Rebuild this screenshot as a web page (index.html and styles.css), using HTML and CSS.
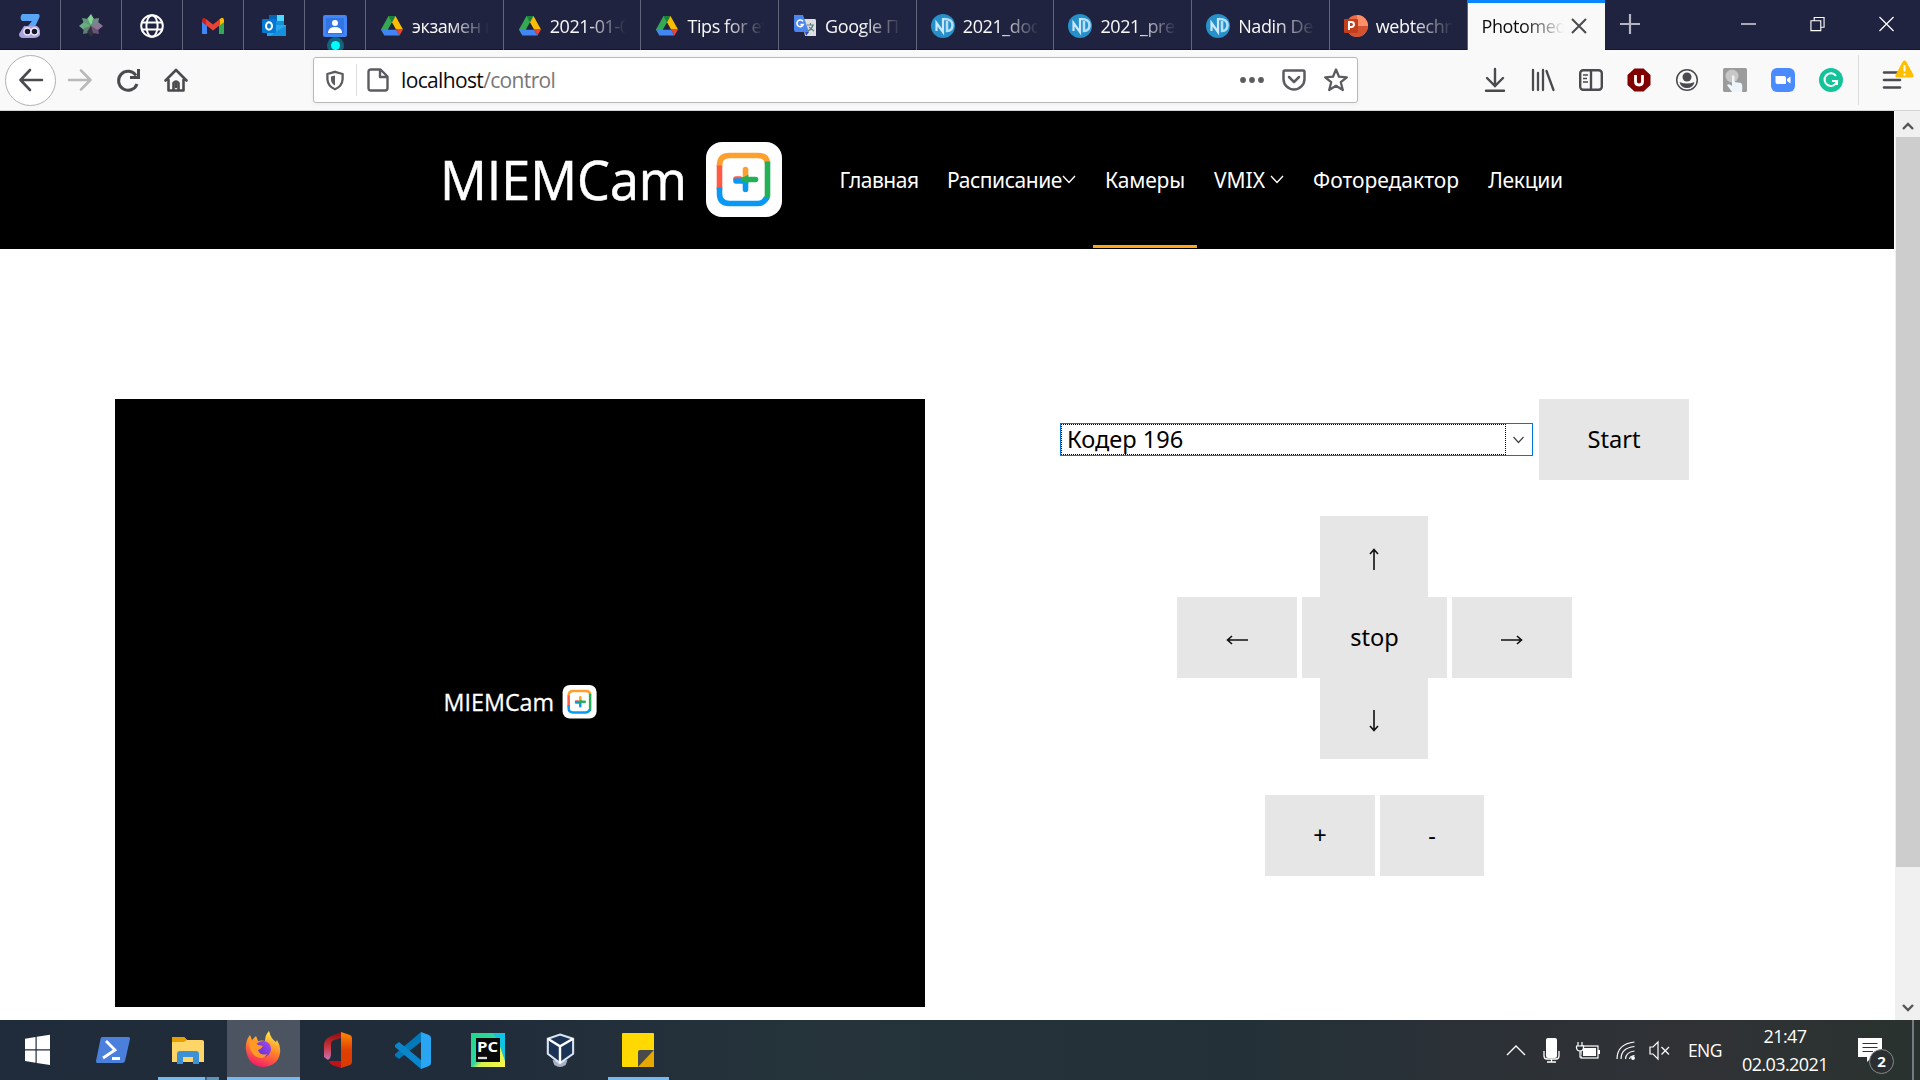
FILE: index.html
```html
<!DOCTYPE html>
<html lang="ru">
<head>
<meta charset="utf-8">
<title>Photomedia</title>
<link rel="stylesheet" href="styles.css">
</head>
<body>
<svg class="defs" aria-hidden="true">
  <defs>
    <linearGradient id="ffBody" x1="0.7" y1="0" x2="0.3" y2="1"><stop offset="0" stop-color="#fff04a"/><stop offset=".45" stop-color="#ff8a26"/><stop offset="1" stop-color="#f5156c"/></linearGradient>
    <linearGradient id="ffGlobe" x1="0" y1="1" x2="1" y2="0"><stop offset="0" stop-color="#592acb"/><stop offset="1" stop-color="#a64bf4"/></linearGradient>
    <linearGradient id="pcBg" x1="0" y1="0" x2="1" y2="1"><stop offset="0" stop-color="#21d789"/><stop offset=".5" stop-color="#2fd8a0"/><stop offset=".6" stop-color="#d9ef4a"/><stop offset="1" stop-color="#fcf84a"/></linearGradient>
    <linearGradient id="officeLeft" x1="0" y1="0" x2="0" y2="1"><stop offset="0" stop-color="#8c0b08"/><stop offset=".5" stop-color="#c8323a"/><stop offset="1" stop-color="#c476b8"/></linearGradient>
    <linearGradient id="officeRight" x1="0" y1="0" x2="0" y2="1"><stop offset="0" stop-color="#ff8a00"/><stop offset=".5" stop-color="#e04000"/><stop offset="1" stop-color="#d83b01"/></linearGradient>
  </defs>
  <symbol id="logo" viewBox="0 0 340 76">
    <text class="logo-text" x="-3" y="58" textLength="247" lengthAdjust="spacingAndGlyphs">MIEMCam</text>
    <rect x="263" y="0" width="76" height="75" rx="16" fill="#fff"/>
    <g transform="translate(-1 -.5)">
    <g fill="none" stroke-width="5.6">
      <path d="M277.500 25V24Q277.500 14 287.500 14H315.500Q325.500 14 325.500 22" stroke="#ffa02e"/>
      <path d="M325.500 20V54Q325.500 56 323.500 58" stroke="#23b057"/>
      <path d="M277.500 24V48" stroke="#ff5a43"/>
      <path d="M277.500 46V52Q277.500 62 287.500 62H315.500Q322 62 324.500 56" stroke="#0a98f5"/>
      <path d="M303.500 28V36" stroke="#ffa02e" stroke-linecap="round"/>
      <path d="M294 37.500H298" stroke="#ff5a43" stroke-linecap="round"/>
      <path d="M294 39.500H303.500V48" stroke="#0a98f5" stroke-linecap="round"/>
      <path d="M302 38H313.500" stroke="#23b057" stroke-linecap="round"/>
    </g>
    <path d="M298 38.500L306.300 33V42Z" fill="#23b057"/>
    </g>
  </symbol>
  <symbol id="drive" viewBox="0 0 24 24">
    <path d="M8.500 2H15.500L12 8.500 4.500 21.500 1 15.500Z" fill="#34a853"/>
    <path d="M8.500 2H15.500L12 8.500Z" fill="#188038"/>
    <path d="M15.500 2L23 15.500H16L12 8.500Z" fill="#fbbc04"/>
    <path d="M1 15.500H16L19.500 21.500H4.500Z" fill="#4285f4"/>
    <path d="M16 15.500H23L19.500 21.500Z" fill="#ea4335"/>
    <path d="M8.200 15.500L12 9 15.800 15.500Z" fill="#20233f"/>
  </symbol>
  <symbol id="nd" viewBox="0 0 24 24">
    <circle cx="12" cy="12" r="12" fill="#2590ca"/>
    <path d="M5.500 17V9L12 18V4" fill="none" stroke="#c9e8fa" stroke-width="2.200"/>
    <path d="M16 7V17Q21.500 17 21.500 11T13 5" fill="none" stroke="#b4dff7" stroke-width="2.600"/>
  </symbol>
</svg>

<div class="tabs">
  <div class="pin"><svg class="ic" viewBox="0 0 24 24"><path d="M4 0H20Q22 0 21.500 3L17 13 10 12 14 7H4Q1 4 4 0Z" fill="#58a4f7"/><path d="M6 12H19Q22 14 22 18V21Q20 24 16 24H5Q1 24 1 20Z" fill="#aaa3dd"/><g fill="#15182d" stroke="#ece9f8" stroke-width="1.500"><circle cx="9.500" cy="17.500" r="3.500"/><circle cx="16.500" cy="17.500" r="3.500"/></g></svg></div>
  <div class="pin"><svg class="ic" viewBox="0 0 24 24"><path d="M12 0L15 5 12 12 8 5Z" fill="#83d596"/><path d="M3 4L9 5 12 12 5 10Z" fill="#5d9c76"/><path d="M0 12L5 8 12 12 5 16Z" fill="#69ad80"/><path d="M4 20L5 14 12 12 9 19Z" fill="#628175"/><path d="M12 23L8 18 12 12 16 18Z" fill="#33313f"/><path d="M20 20L14 19 12 12 19 14Z" fill="#675573"/><path d="M24 12L19 16 12 12 19 8Z" fill="#8d7598"/><path d="M20 4L19 10 12 12 14 5Z" fill="#708c85"/></svg></div>
  <div class="pin"><svg class="ic" viewBox="0 0 24 24" fill="none" stroke="#fff" stroke-width="2"><circle cx="12" cy="12" r="10.800"/><ellipse cx="12" cy="12" rx="5.600" ry="10.800"/><path d="M2 8.500H22M2 15.500H22"/></svg></div>
  <div class="pin"><svg class="ic" viewBox="0 0 24 24"><path d="M1 7V20H6V11Z" fill="#4285f4"/><path d="M18 11V20H23V7Z" fill="#34a853"/><path d="M1 8V6Q1 4 3.500 4L6 6V12Z" fill="#c5221f"/><path d="M18 12V6Q22 1.500 23 6V8Z" fill="#fbbc04"/><path d="M5 5L12 10.500 19 5V11L12 16.500 5 11Z" fill="#ea4335"/></svg></div>
  <div class="pin"><svg class="ic" viewBox="0 0 24 24"><path d="M7 1H22V13H7Z" fill="#1490df"/><path d="M15 1H22V7H15Z" fill="#50d9ff"/><path d="M7 1H15V7H7Z" fill="#0364b8"/><path d="M5 11H24V22H5Z" fill="#28a8ea"/><path d="M24 12V22H8L15 17Z" fill="#1490df"/><rect x="0" y="5" width="14" height="14" rx="1" fill="#0078d4"/><ellipse cx="7" cy="12" rx="3" ry="3.700" fill="none" stroke="#fff" stroke-width="2"/></svg></div>
  <div class="pin live"><svg class="ic" viewBox="0 0 24 24"><rect width="24" height="22" y="1" rx="2" fill="#4285f4"/><path d="M3 4H21V20H3Z" fill="#3374e5"/><circle cx="12" cy="9" r="3" fill="#fff"/><path d="M5 18Q6 13 12 13T19 18V19H5Z" fill="#fff"/></svg><i class="dot"></i></div>
  <div class="tab"><svg class="ic"><use href="#drive"/></svg><span class="label">экзамен п</span></div>
  <div class="tab"><svg class="ic"><use href="#drive"/></svg><span class="label">2021-01-0</span></div>
  <div class="tab"><svg class="ic"><use href="#drive"/></svg><span class="label">Tips for ef</span></div>
  <div class="tab"><svg class="ic" viewBox="0 0 24 24"><path d="M9 5H22Q23 5 23 7V22H12Z" fill="#dcdfe1"/><path d="M1 1H10L16 18H3Q1 18 1 16Z" fill="#4a86ee"/><path d="M12 18H16L13 22Z" fill="#3048c0"/><path d="M10 7.500A3.300 3.300 0 1 0 10.300 10.500H7.500" fill="none" stroke="#fff" stroke-width="1.600"/><path d="M14 11H21M17.500 9V11M20 11Q19 15 15 17M16 13L21 17" fill="none" stroke="#607d85" stroke-width="1.200"/></svg><span class="label">Google П</span></div>
  <div class="tab"><svg class="ic"><use href="#nd"/></svg><span class="label">2021_doc</span></div>
  <div class="tab"><svg class="ic"><use href="#nd"/></svg><span class="label">2021_prez</span></div>
  <div class="tab"><svg class="ic"><use href="#nd"/></svg><span class="label">Nadin De</span></div>
  <div class="tab"><svg class="ic" viewBox="0 0 24 24"><circle cx="13" cy="12" r="11" fill="#ed6c47"/><path d="M13 1A11 11 0 0 1 24 12H13Z" fill="#ff8f6b"/><path d="M2.500 15A11 11 0 0 0 24 12H13Z" fill="#d35230"/><rect x="0" y="5" width="14" height="14" rx="1" fill="#c43e1c"/><path d="M5 16V8H7.500A2.400 2.400 0 0 1 7.500 13H5" fill="none" stroke="#fff" stroke-width="2"/></svg><span class="label">webtechn</span></div>
  <div class="tab active"><span class="label">Photomed</span><svg class="close" viewBox="0 0 14 14"><path d="M0 0L14 14M14 0L0 14" stroke="#4a4a4f" stroke-width="2"/></svg></div>
  <svg class="plus" viewBox="0 0 20 20"><path d="M10 0V20M0 10H20" stroke="#b4b5c0" stroke-width="2.200"/></svg>
  <div class="window-buttons">
    <svg viewBox="0 0 16 16"><path d="M0 8H16" stroke="#fff" stroke-width="1.300"/></svg>
    <svg viewBox="0 0 16 16" fill="none" stroke="#fff" stroke-width="1.200"><path d="M1 4.500H11.500V15H1ZM4.500 4.500V1H15V11.500H11.500"/></svg>
    <svg viewBox="0 0 16 16"><path d="M0.500 0.500L15.500 15.500M15.500 0.500L0.500 15.500" stroke="#fff" stroke-width="1.300"/></svg>
  </div>
</div>

<div class="toolbar">
  <div class="back"><svg class="ic" viewBox="0 0 24 24" fill="none" stroke="#4a4a4f" stroke-width="2.600" stroke-linecap="round" stroke-linejoin="round"><path d="M23 12H1.500M11 2L1.500 12L11 22"/></svg></div>
  <svg class="ic forward" viewBox="0 0 24 24" fill="none" stroke="#b9b9bb" stroke-width="2.600" stroke-linecap="round" stroke-linejoin="round"><path d="M1 12H22.500M13 2.500L22.500 12L13 21.500"/></svg>
  <svg class="ic reload" viewBox="0 0 24 24" fill="none" stroke="#4a4a4f" stroke-width="3"><path d="M20 7.500A9.500 9.500 0 1 0 21 16"/><path d="M22.500 1V9.500H14" /></svg>
  <svg class="ic home" viewBox="0 0 24 24" fill="none" stroke="#4a4a4f" stroke-width="2.600" stroke-linejoin="round" stroke-linecap="round"><path d="M1.500 12.500L12 2L22.500 12.500M4.500 12V22.500H19.500V12"/><path d="M9.500 22V15Q12 12 14.500 15V22" /><path d="M12 16V19"/></svg>
  <div class="url">
    <svg class="shield" viewBox="0 0 18 20"><path d="M9 1.300L16.600 3.500V9Q16 16 9 18.700Q2 16 1.400 9V3.500Z" fill="none" stroke="#5c5c60" stroke-width="2.300"/><path d="M9 5V15Q5 13 5 9V6Z" fill="#5c5c60"/></svg>
    <i class="sep"></i>
    <svg class="page" viewBox="0 0 22 24" fill="none" stroke="#5c5c60" stroke-width="2.400" stroke-linejoin="round"><path d="M4 1.500H13.500L20.500 8.500V20Q20.500 22.500 18 22.500H4Q1.500 22.500 1.500 20V4Q1.500 1.500 4 1.500ZM13 2V9H20"/></svg>
    <span class="address">localhost<span class="path">/control</span></span>
    <svg class="more" viewBox="0 0 24 6"><g fill="#5c5c60"><circle cx="3" cy="3" r="2.900"/><circle cx="12" cy="3" r="2.900"/><circle cx="21" cy="3" r="2.900"/></g></svg>
    <svg class="ic pocket" viewBox="0 0 24 24" fill="none" stroke="#5c5c60" stroke-width="2.500" stroke-linejoin="round" stroke-linecap="round"><path d="M3 2.500H21Q22.500 2.500 22.500 4V11A10.500 10.500 0 0 1 1.500 11V4Q1.500 2.500 3 2.500ZM7 9L12 14L17 9"/></svg>
    <svg class="ic" viewBox="0 0 24 24" fill="none" stroke="#5c5c60" stroke-width="2.300" stroke-linejoin="round"><path d="M12 1.500L15 8.700L22.800 9.300L16.800 14.200L18.800 22L12 17.800L5.200 22L7.200 14.200L1.200 9.300L9 8.700Z"/></svg>
  </div>
  <div class="addons">
    <svg class="ic" viewBox="0 0 24 24" fill="none" stroke="#4a4a4f" stroke-width="2.400" stroke-linecap="round"><path d="M12 1V17M4 10L12 18L20 10M3 22.700H21"/></svg>
    <svg class="ic" viewBox="0 0 24 24" fill="none" stroke="#4a4a4f" stroke-width="2.300" stroke-linecap="round"><path d="M2 2V22M7 5V22M12 2V22M15.500 3L22.500 22"/></svg>
    <svg class="ic" viewBox="0 0 24 24" fill="none" stroke="#4a4a4f" stroke-width="2.400"><rect x="1.200" y="2.200" width="21.600" height="19.600" rx="3"/><path d="M12 2V22"/><path d="M4 7H9M4 10.500H8M4 14H9" stroke-width="1.500"/></svg>
    <svg class="ic" viewBox="0 0 24 24"><path d="M7.500 0.500H16.500L23.500 7V17L16.500 23.500H7.500L0.500 17V7Z" fill="#800000"/><path d="M8.500 7V13.500Q8.500 17 12 17T15.500 13.500V7" fill="none" stroke="#fff" stroke-width="2.800"/></svg>
    <svg class="ic" viewBox="0 0 24 24"><circle cx="12" cy="12" r="10.300" fill="none" stroke="#4a4a4f" stroke-width="1.500"/><circle cx="12" cy="9" r="4.500" fill="#4a4a4f"/><path d="M4.500 14Q12 17 19.500 14Q18 20 12 20T4.500 14Z" fill="#4a4a4f"/></svg>
    <svg class="ic" viewBox="0 0 24 24"><rect width="24" height="24" rx="1.500" fill="#9b9b9b"/><circle cx="9" cy="8" r="6.500" fill="#c7c7c7"/><path d="M9 8Q11 6 11.500 9V14L18 15Q20 16 19 24H9L4 17Q6 15 9 18Z" fill="#eef5fb"/></svg>
    <svg class="ic" viewBox="0 0 24 24"><rect width="24" height="24" rx="6" fill="#4a8cff"/><path d="M4.500 8H13Q15 8 15 10V16H6.500Q4.500 16 4.500 14ZM16 11L19.500 8.500V15.500L16 13Z" fill="#fff"/></svg>
    <svg class="ic" viewBox="0 0 24 24"><circle cx="12" cy="12" r="12" fill="#15c39a"/><path d="M17 8A6.300 6.300 0 1 0 18 13H13M18 12V17" fill="none" stroke="#fff" stroke-width="2"/></svg>
  </div>
  <div class="menu"><svg class="bars" viewBox="0 0 20 20" stroke="#4a4a4f" stroke-width="2.600" stroke-linecap="round"><path d="M2 2.500H18M2 10H18M2 17.500H18"/></svg><svg class="warn" viewBox="0 0 19 18"><path d="M9.500 0.500Q10.500 0 11.500 2L18.500 15Q19 17.500 17 17.500H2Q0 17.500 0.500 15L7.500 2Q8.500 0 9.500 .5Z" fill="#ffbf00"/><path d="M9.500 5V11.500M9.500 13.500V15.500" stroke="#fff" stroke-width="2"/></svg></div>
</div>

<div class="viewport">
  <div class="site">
    <header class="header">
      <svg class="logo"><use href="#logo"/></svg>
      <nav class="nav">
        <a class="n1">Главная</a>
        <a class="n2">Расписание<svg class="chev" viewBox="0 0 14 9"><path d="M1 1L7 7.500L13 1"/></svg></a>
        <a class="n3 current">Камеры</a>
        <a class="n4">VMIX<svg class="chev gap" viewBox="0 0 14 9"><path d="M1 1L7 7.500L13 1"/></svg></a>
        <a class="n5">Фоторедактор</a>
        <a class="n6">Лекции</a>
      </nav>
    </header>
    <main class="main">
      <div class="video"><svg class="logo-small"><use href="#logo"/></svg></div>
      <div class="controls">
        <div class="row coder">
          <div class="select"><span class="value">Кодер 196</span><svg class="arrow" viewBox="0 0 11 8"><path d="M.5 1L5.500 6.500L10.500 1" fill="none" stroke="#444" stroke-width="1.200"/></svg></div>
          <div class="btn start">Start</div>
        </div>
        <div class="btn vertical"><svg class="v" viewBox="0 0 10 22"><path d="M5 22V1M1 6L5 1.500L9 6"/></svg></div>
        <div class="row middle">
          <div class="btn side"><svg class="h" viewBox="0 0 22 10"><path d="M22 5H1M6 1L1.500 5L6 9"/></svg></div>
          <div class="btn stop">stop</div>
          <div class="btn side"><svg class="h" viewBox="0 0 22 10"><path d="M0 5H21M16 1L20.500 5L16 9"/></svg></div>
        </div>
        <div class="btn vertical"><svg class="v" viewBox="0 0 10 22"><path d="M5 0V21M1 16L5 20.500L9 16"/></svg></div>
        <div class="row zoom"><div class="btn zin">+</div><div class="btn zout">-</div></div>
      </div>
    </main>
  </div>
  <div class="scroll">
    <svg viewBox="0 0 12 8"><path d="M1 7L6 2L11 7"/></svg>
    <i class="thumb"></i>
    <svg class="down" viewBox="0 0 12 8"><path d="M1 1L6 6L11 1"/></svg>
  </div>
</div>

<div class="taskbar">
  <div class="task"><svg width="25" height="32" viewBox="0 0 25 32" fill="#fff"><path d="M0 4.700L10.500 3V15.200H0ZM11.700 2.800L25 .8V15.200H11.700ZM0 16.500H10.500V28.700L0 27ZM11.700 16.500H25V31L11.700 29Z"/></svg></div>
  <div class="task"><svg width="36" height="28" viewBox="0 0 36 28"><path d="M7 1H33Q35.500 1 35 3L30 25Q29.500 27 27 27H2.500Q.5 27 1 25L5.500 3Q6 1 7 1Z" fill="#4a80dc"/><path d="M11 5L20 14L8 22M17 22.500H25" fill="none" stroke="#fff" stroke-width="2.800"/></svg></div>
  <div class="task open multi"><svg width="32" height="28" viewBox="0 0 32 28"><path d="M0 2Q0 1 2 1H12L15 4H30Q32 4 32 6V26H0Z" fill="#ffd567"/><path d="M0 1H12L15 4L12 6H0Z" fill="#e5a000"/><path d="M5 28V18Q5 15 8 15H24Q27 15 27 18V28H21V21H11V28Z" fill="#3b91d5"/></svg></div>
  <div class="task open focus"><svg width="36" height="36" viewBox="0 0 36 36"><path d="M1 19Q0 10 5 4L7 9L11 5L13 10Q17 9 20 10Q20 4 24 0Q26 8 31 11L32 9Q36 15 35 22Q33 35 18 36Q3 35 1 19Z" fill="url(#ffBody)"/><circle cx="18" cy="18" r="8" fill="url(#ffGlobe)"/><path d="M4 10Q10 9 13 14L18 15Q16 18 13 19Q15 25 22 23Q18 30 10 25Q4 20 4 10Z" fill="#ff9a27"/></svg></div>
  <div class="task"><svg width="28" height="36" viewBox="0 0 28 36"><path d="M17 0L7 4Q0 7 0 13V25L4 28Q7 26 7 23V12Q7 9 10 8L17 6Z" fill="url(#officeLeft)"/><path d="M17 0L26 3Q28 4 28 6V30Q28 32 26 33L17 36V29Z" fill="url(#officeRight)"/><path d="M5 29H17V36L8 33Q5 31 5 29Z" fill="#c01018"/></svg></div>
  <div class="task"><svg width="36" height="37" viewBox="0 0 36 37"><path d="M26 0V10L4 27L0 24V22Z" fill="#0078b9"/><path d="M0 13L4 10L26 28V37L0 15Z" fill="#0a86cc"/><path d="M26 0L34 3Q36 4 36 6V31Q36 33 34 34L26 37Z" fill="#2aa5f2"/></svg></div>
  <div class="task"><svg width="34" height="34" viewBox="0 0 34 34"><rect width="34" height="34" fill="url(#pcBg)"/><path d="M22 0H34V28L27 8Z" fill="#12c4e4"/><rect x="5" y="5" width="24" height="24" fill="#090909"/><text class="pc" x="6" y="19" textLength="21" lengthAdjust="spacingAndGlyphs">PC</text><path d="M7 25H16" stroke="#ddd" stroke-width="2.300"/></svg></div>
  <div class="task vbox"><svg width="30" height="36" viewBox="0 0 32 36"><path d="M8 29H24L22 34Q16 38 10 34Z" fill="#a8b0c8"/><path d="M16 1.500L30 6V22L16 32L3 22V6Z" fill="#1b3456" stroke="#dbe5f2" stroke-width="2.200"/><path d="M3 6L16 14L30 6M16 14V32" fill="none" stroke="#fff" stroke-width="2.600"/></svg></div>
  <div class="task open note"><svg width="32" height="34" viewBox="0 0 32 34"><rect width="32" height="34" rx="1" fill="#ffd900"/><path d="M16 34L32 17V33Q32 34 31 34Z" fill="#e6a900"/><path d="M16 34V19Q16 17 18 17H32Z" fill="#4a4a4a"/></svg></div>
  <div class="tray">
    <svg class="t1" width="20" height="12" viewBox="0 0 20 12" fill="none" stroke="#fff" stroke-width="1.400"><path d="M1 11L10 2L19 11"/></svg>
    <svg class="t2" width="17" height="25" viewBox="0 0 17 25"><rect x="3" y="0" width="11" height="20" rx="2" fill="#fff"/><path d="M1 13V18Q1 21 4 21H13Q16 21 16 18V13M8.500 21V24M4 24H13" fill="none" stroke="#fff" stroke-width="1.300"/></svg>
    <svg class="t3" width="24" height="17" viewBox="0 0 24 17"><rect x="5" y="4" width="17" height="12" fill="none" stroke="#fff" stroke-width="1.200"/><path d="M7 6H20V14H7ZM22 8H24V12H22Z" fill="#fff"/><path d="M2 0V4M6 0V4M0 4H7.500V6Q7 9 4 9T.5 6V4M4 9V15H6" fill="#2b3036" stroke="#fff" stroke-width="1.200"/></svg>
    <svg class="t4" width="20" height="19" viewBox="0 0 20 19" fill="none" stroke="#fff" stroke-width="1.200"><path d="M1 18Q1 3 18.500 1M5 18Q5 7 18.500 5.500M9.500 18Q10 11 18.500 10"/><path d="M13.500 18Q14 15 18.500 14.500"/><circle cx="17" cy="17" r="1.300" fill="#fff"/></svg>
    <svg class="t5" width="21" height="19" viewBox="0 0 21 19" fill="none" stroke="#fff" stroke-width="1.200"><path d="M1 6H4L9 1V18L4 13H1ZM12.500 6L20 13.500M20 6L12.500 13.500"/></svg>
    <span class="lang">ENG</span>
    <div class="clock"><span class="time">21:47</span><span class="date">02.03.2021</span></div>
    <div class="notify"><svg width="24" height="24" viewBox="0 0 24 24"><path d="M0 0H24V19H14L9 24V19H0Z" fill="#fff"/><path d="M4.500 5.500H19.500M4.500 9.500H19.500M4.500 13.500H15" stroke="#333" stroke-width="1.100"/></svg><b class="count">2</b></div>
    <i class="peek"></i>
  </div>
</div>
</body>
</html>
```
FILE: styles.css
```css
* { box-sizing: border-box; }
body { margin: 0; width: 1920px; height: 1080px; overflow: hidden; display: flex; flex-direction: column; background: #fff; font-family: "Noto Sans", sans-serif; }
svg { display: block; flex: none; overflow: visible; }
.defs { position: absolute; width: 0; height: 0; }
.ic { width: 24px; height: 24px; }

/* tab strip */
.tabs { height: 50px; flex: none; display: flex; background: #20233f; border-bottom: 1px solid #131529; font-family: "Open Sans", sans-serif; }
.pin { width: 61px; height: 50px; flex: none; display: flex; align-items: center; justify-content: center; border-right: 1px solid #62647a; padding-top: 2px; }
.live { position: relative; }
.dot { position: absolute; left: 26px; top: 41px; width: 9px; height: 9px; border-radius: 50%; background: #00feff; box-shadow: 0 0 0 4px rgba(0, 180, 200, .45); clip-path: inset(-5px -5px 0 -5px); }
.tab { width: 137.7px; height: 50px; flex: none; display: flex; align-items: center; padding: 2px 14px 0 14px; gap: 8px; border-right: 1px solid #62647a; color: #f9f9fa; }
.label { flex: 1; min-width: 0; overflow: hidden; white-space: nowrap; font-size: 18px; line-height: 28px; letter-spacing: -.4px; padding-bottom: 1px; -webkit-mask-image: linear-gradient(to right, #000 calc(100% - 40px), transparent); mask-image: linear-gradient(to right, #000 calc(100% - 40px), transparent); }
.active { background: #f9f9fa; color: #0c0c0d; border-right: 0; box-shadow: inset 0 3px #0a84ff; padding-right: 19px; }
.close { width: 14px; height: 14px; }
.plus { width: 20px; height: 20px; margin: 14px 0 0 15px; }
.window-buttons { display: flex; margin-left: auto; gap: 54px; padding: 16px 26px 0 0; }
.window-buttons svg { width: 15px; height: 16px; }

/* navigation toolbar */
.toolbar { height: 61px; flex: none; display: flex; align-items: center; background: #f9f9fa; border-bottom: 1px solid #d5d5d8; padding-left: 5px; }
.back { width: 51px; height: 51px; border: 1px solid #b1b1b3; border-radius: 50%; background: #fff; display: flex; align-items: center; justify-content: center; }
.forward { margin-left: 12px; }
.reload, .home { margin-left: 24px; }
.url { width: 1045px; height: 46px; margin-left: 125px; display: flex; align-items: center; background: #fff; border: 1px solid #b9b9bb; border-radius: 3px; padding: 0 9px 0 12px; box-shadow: 0 1px 4px rgba(0, 0, 0, .06); }
.shield { width: 18px; height: 21px; }
.sep { width: 1px; height: 32px; margin: 0 10px 0 12px; background: #dededf; }
.page { width: 22px; height: 24px; }
.address { margin-left: 12px; font: 21px "Open Sans", sans-serif; letter-spacing: -.65px; color: #0c0c0d; }
.path { color: #77777a; }
.more { width: 24px; height: 6px; margin-left: auto; }
.pocket { margin: 0 18px; }
.addons { display: flex; gap: 24px; margin-left: 125px; }
.menu { position: relative; height: 50px; margin-left: 15px; border-left: 1px solid #dcdcde; padding: 15px 0 0 23px; }
.bars { width: 20px; height: 20px; }
.warn { position: absolute; left: 36px; top: 5px; width: 19px; height: 18px; }

/* page */
.viewport { flex: 1; min-height: 0; display: flex; }
.site { width: 1894px; height: 909px; }
.header { height: 138px; background: #000; display: flex; align-items: center; padding-left: 443px; }
.logo { width: 340px; height: 76px; }
.logo-text { font: 54px "Open Sans", sans-serif; fill: #fff; stroke: #fff; stroke-width: .6px; }
.nav { height: 138px; margin-left: 45px; display: flex; gap: 5px; }
.nav a { display: flex; align-items: center; justify-content: center; height: 137px; padding-top: 3px; border-bottom: 3px solid transparent; color: #fff; font-size: 21px; white-space: nowrap; }
.nav .n1 { width: 102px; letter-spacing: -.5px; }
.nav .n2 { width: 153px; letter-spacing: -.45px; }
.nav .n3 { width: 104px; letter-spacing: -.2px; }
.n4 { width: 94px; }
.n5 { width: 170px; }
.nav .n6 { width: 99px; letter-spacing: -.3px; }
.nav .current { border-bottom-color: #ffa51e; }
.chev { width: 14px; height: 9px; fill: none; stroke: #fff; stroke-width: 1.400; }
.chev.gap { margin-left: 5px; }
.main { display: flex; align-items: flex-start; padding: 150px 205px 0 115px; justify-content: space-between; }
.video { width: 810px; height: 608px; background: #000; display: flex; align-items: center; justify-content: center; padding: 0 0 2px 2px; }
.logo-small { width: 154px; height: 34px; }
.controls { width: 629px; display: flex; flex-direction: column; align-items: center; }
.row { display: flex; align-items: center; }
.coder { gap: 6px; margin-bottom: 36px; }
.select { width: 473px; height: 33px; display: flex; align-items: center; border: 1px solid #0078d7; font-size: 23.6px; }
.value { width: 445px; height: 31px; line-height: 29px; padding-left: 5px; border: 1px dotted #000; }
.arrow { width: 11px; height: 8px; margin-left: 7px; }
.btn { height: 81px; display: flex; align-items: center; justify-content: center; background: #e6e6e6; color: #000; font-size: 23.6px; padding-bottom: 2px; }
.btn svg { fill: none; stroke: #111; stroke-width: 1.600; }
.v { width: 10px; height: 22px; margin-top: 7px; }
.h { width: 22px; height: 10px; margin-top: 6px; }
.start { width: 150px; }
.vertical { width: 108px; margin-right: 1px; }
.middle { gap: 5px; }
.side { width: 120px; }
.stop { width: 145px; }
.zoom { gap: 5px; margin-top: 36px; }
.zin { width: 110px; }
.zout { width: 104px; }
.scroll { width: 26px; height: 909px; background: #f0f0f0; border-left: 1px solid #fff; display: flex; flex-direction: column; align-items: center; padding-top: 11px; }
.scroll svg { width: 12px; height: 8px; fill: none; stroke: #555; stroke-width: 2.400; }
.thumb { width: 24px; height: 730px; margin-top: 7px; background: #cdcdcd; }
.scroll .down { margin-top: 137px; }

/* taskbar */
.taskbar { height: 60px; flex: none; display: flex; gap: 2px; background: linear-gradient(to right, #202b3b 0, #212c3a 25%, #25333a 42%, #243038 65%, #2d3136 80%, #303235 90%, #29322f 100%); }
.task { width: 73px; height: 60px; flex: none; display: flex; align-items: center; justify-content: center; padding-left: 2px; }
.open { background: linear-gradient(#76b9ed, #76b9ed) 8px bottom / 61px 3px no-repeat; }
.multi { background: linear-gradient(to right, #76b9ed 47px, #3f6180 47px, #3f6180 49px, #5f93ba 49px) 8px bottom / 61px 3px no-repeat; }
.focus { margin-left: 2px; margin-right: -2px; padding: 0 2px 2px 0; background: linear-gradient(#76b9ed, #76b9ed) center bottom / 73px 3px no-repeat #4d5461; }
.vbox { padding: 0 3px 0 0; }
.pc { font: bold 15px "Open Sans", sans-serif; fill: #fff; }
.tray { margin-left: auto; display: flex; align-items: center; font-family: "Open Sans", sans-serif; color: #fff; }
.t2 { margin-left: 17px; }
.t3 { margin-left: 16px; }
.t4 { margin-left: 16px; }
.t5 { margin-left: 13px; }
.lang { margin-left: 18px; font-size: 17.500px; letter-spacing: -.6px; width: 35px; }
.clock { width: 90px; margin-left: 17px; display: flex; flex-direction: column; align-items: center; font-size: 18px; line-height: 28px; letter-spacing: -.6px; }
.notify { position: relative; margin-left: 28px; width: 24px; height: 24px; }
.count { position: absolute; left: 11px; top: 11px; width: 25px; height: 25px; border: 1px solid #888; border-radius: 50%; background: #2b2f31; font-size: 15px; line-height: 23px; text-align: center; }
.peek { width: 2px; height: 60px; margin: 0 6px 0 30px; background: #777c7e; }
```
